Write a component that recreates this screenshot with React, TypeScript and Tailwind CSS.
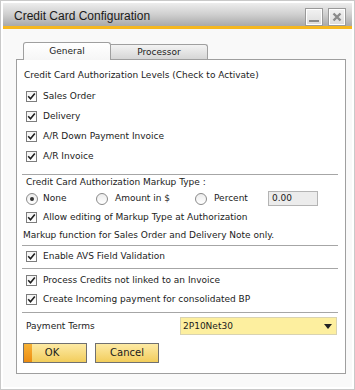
import React from 'react';

const font = { fontFamily: '"DejaVu Sans", Verdana, sans-serif' };

const CheckBox: React.FC<{ checked?: boolean }> = ({ checked = true }) => (
  <span className="w-[11px] h-[11px] border border-[#7d7d7d] bg-gradient-to-b from-[#f4f4f4] to-white flex items-center justify-center shrink-0">
    {checked && (
      <svg width="9" height="9" viewBox="0 0 9 9">
        <path d="M1.2 4.3 L3.5 6.8 L7.8 1.5" fill="none" stroke="#1e1e1e" strokeWidth="1.6" />
      </svg>
    )}
  </span>
);

const Radio: React.FC<{ checked?: boolean }> = ({ checked }) => (
  <span className="w-[12px] h-[12px] rounded-full border border-[#8a8a8a] bg-gradient-to-b from-[#ececec] to-white flex items-center justify-center shrink-0">
    {checked && <span className="w-[4px] h-[4px] rounded-full bg-[#333]" />}
  </span>
);

const CheckRow: React.FC<{ label: string; h?: string }> = ({ label, h = 'h-[20px]' }) => (
  <div className={`flex items-center ${h} ml-[3px] gap-[6px]`}>
    <CheckBox />
    <span>{label}</span>
  </div>
);

const Sep = ({ mt }: { mt: string }) => (
  <div className={`h-px shrink-0 bg-[#a6a6a6] ml-[-1px] mr-[7px] ${mt}`} />
);

export default function App() {
  return (
    <div
      style={font}
      className="w-[355px] h-[390px] bg-[#c9c9c9] p-px text-[9px] text-[#1b1b1b] leading-none"
    >
      <div className="w-full h-full bg-white p-[2px] flex flex-col">
        {/* Title bar */}
        <div className="h-[25px] bg-gradient-to-b from-[#ededed] via-[#cfcfcf] to-[#a9a9a9] flex items-center pl-[11px] pr-[6px]">
          <span className="text-[12px] text-[#1a1a1a] mt-[2px] flex-1" style={{ fontFamily: '"Liberation Sans", Arial, sans-serif' }}>
            Credit Card Configuration
          </span>
          <div className="flex gap-[5px] mt-[4px]">
            <div className="w-[18px] h-[18px] border border-[#9a9a9a] bg-gradient-to-b from-[#f2f2f2] to-[#dcdcdc] flex items-end justify-center pb-[3px] shadow-[inset_0_0_0_1px_#fff]">
              <span className="w-[10px] h-[2px] bg-[#8a8a8a]" />
            </div>
            <div className="w-[18px] h-[18px] border border-[#9a9a9a] bg-gradient-to-b from-[#f2f2f2] to-[#dcdcdc] flex items-center justify-center shadow-[inset_0_0_0_1px_#fff]">
              <svg width="10" height="10" viewBox="0 0 10 10">
                <path d="M1.5 1.5 L8.5 8.5 M8.5 1.5 L1.5 8.5" stroke="#8a8a8a" strokeWidth="2.4" />
              </svg>
            </div>
          </div>
        </div>
        <div className="h-[3px] bg-[#f6b71e]" />

        {/* Body */}
        <div className="flex-1 bg-[#f9f9f9] pt-[13px] pl-[13px] pr-[6px] pb-[13px] flex flex-col">
          {/* Tabs */}
          <div className="flex items-end h-[18px] pl-[7px] border-b border-[#9f9f9f] relative shrink-0">
            <div className="w-[88px] h-[18px] -mb-px border border-b-0 border-[#9f9f9f] rounded-t-[3px] bg-gradient-to-b from-white to-[#f6f6f6] flex items-center justify-center relative z-10">
              General
            </div>
            <div className="w-[97px] h-[15px] border border-b-0 border-l-0 border-[#9f9f9f] rounded-tr-[3px] bg-gradient-to-b from-[#f3f3f3] to-[#d6d6d6] flex items-center justify-center">
              Processor
            </div>
          </div>

          {/* Panel */}
          <div className="flex-1 bg-white border border-t-0 border-[#9f9f9f] pl-[6px] pt-[8px] pb-[10px] flex flex-col">
            <div className="h-[14px] flex items-center ml-[1px]">Credit Card Authorization Levels (Check to Activate)</div>
            <div className="mt-[4px]">
              <CheckRow label="Sales Order" />
              <CheckRow label="Delivery" />
              <CheckRow label="A/R Down Payment Invoice" />
              <CheckRow label="A/R Invoice" />
            </div>
            <Sep mt="mt-[8px]" />
            <div className="h-[14px] flex items-center ml-[3px]">Credit Card Authorization Markup Type :</div>
            <div className="h-[19px] flex items-center ml-[3px]">
              <div className="flex items-center gap-[5px] w-[70px]">
                <Radio checked />
                <span>None</span>
              </div>
              <div className="flex items-center gap-[7px] w-[99px]">
                <Radio />
                <span>Amount in $</span>
              </div>
              <div className="flex items-center gap-[7px] w-[73px]">
                <Radio />
                <span>Percent</span>
              </div>
              <div className="w-[50px] h-[15px] bg-[#ececec] border border-[#b4b4b4] flex items-center pl-[3px]">0.00</div>
            </div>
            <CheckRow label="Allow editing of Markup Type at Authorization" h="h-[18px]" />
            <div className="h-[14px] flex items-center mt-[2px]">Markup function for Sales Order and Delivery Note only.</div>
            <Sep mt="mt-[3px]" />
            <CheckRow label="Enable AVS Field Validation" />
            <Sep mt="mt-[2px]" />
            <div className="mt-[2px]">
              <CheckRow label="Process Credits not linked to an Invoice" h="h-[19px]" />
              <CheckRow label="Create Incoming payment for consolidated BP" h="h-[19px]" />
            </div>
            <Sep mt="mt-[3px]" />
            <div className="mt-[4px] h-[18px] flex items-center mr-[8px]">
              <div className="w-[157px] h-full flex items-center pl-[3px] bg-white">Payment Terms</div>
              <div className="flex-1 h-full bg-[#fdef9f] border border-[#d9d3b0] flex items-center pl-[2px] pr-[4px]">
                <span className="flex-1">2P10Net30</span>
                <svg width="8" height="5" viewBox="0 0 8 5">
                  <path d="M0 0 H8 L4 5 Z" fill="#222" />
                </svg>
              </div>
            </div>
            <div className="mt-[8px] flex gap-[8px]">
              <div className="w-[64px] h-[20px] border border-[#707070] bg-gradient-to-b from-[#fdeaa4] to-[#f2cd5a] flex items-center relative">
                <span className="absolute left-0 top-0 bottom-0 w-[8px] bg-gradient-to-b from-[#f7b234] to-[#ec8c10]" />
                <span className="w-full text-center text-[10px] pr-[6px]">OK</span>
              </div>
              <div className="w-[64px] h-[20px] border border-[#707070] bg-gradient-to-b from-[#fdeaa4] to-[#f2cd5a] flex items-center justify-center text-[10px]">
                Cancel
              </div>
            </div>
          </div>
        </div>
      </div>
    </div>
  );
}
